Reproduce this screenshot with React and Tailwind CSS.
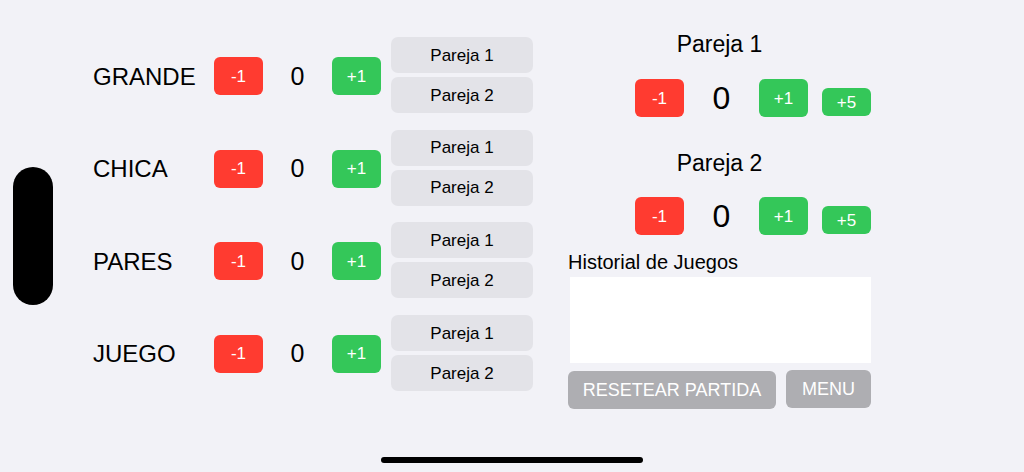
import React from 'react';

const rows = ['GRANDE', 'CHICA', 'PARES', 'JUEGO'];

const RedBtn = ({ className = '' }) => (
  <button className={`w-[49px] h-[38px] rounded-[6px] bg-[#ff3b30] text-white text-[17px] leading-none ${className}`}>-1</button>
);

const GreenBtn = ({ label = '+1', className = '' }) => (
  <button className={`w-[49px] h-[38px] rounded-[6px] bg-[#34c759] text-white text-[17px] leading-none ${className}`}>{label}</button>
);

const ScoreRow = ({ name }) => (
  <div className="flex items-center h-[76px]">
    <div className="w-[121px] text-[24px] text-black leading-none mt-[3px]">{name}</div>
    <RedBtn className="mt-[2px]" />
    <div className="w-[69px] text-center text-[25px] text-black leading-none mt-[2px]">0</div>
    <GreenBtn className="mt-[2px]" />
    <div className="ml-[10px] w-[142px] flex flex-col gap-[4px]">
      <button className="h-[36px] pt-[1px] rounded-[7px] bg-[#e3e3e8] text-[17px] text-black">Pareja 1</button>
      <button className="h-[36px] pt-[1px] rounded-[7px] bg-[#e3e3e8] text-[17px] text-black">Pareja 2</button>
    </div>
  </div>
);

const TeamScore = () => (
  <div className="flex items-end pl-[67px] h-[38px]">
    <RedBtn />
    <div className="w-[75px] h-[38px] flex items-center justify-center text-[32px] text-black leading-none">0</div>
    <GreenBtn />
    <GreenBtn label="+5" className="ml-[14px] !h-[28px] mb-[1px]" />
  </div>
);

export default function App() {
  return (
    <div
      className="relative w-[1024px] h-[472px] bg-[#f2f2f7] overflow-hidden"
      style={{ fontFamily: '"Liberation Sans", Arial, sans-serif' }}
    >
      {/* sensor housing */}
      <div className="absolute left-[13px] top-[167px] w-[40px] h-[138px] rounded-full bg-black" />

      <div className="flex pl-[93px] pt-[37px]">
        <div className="flex flex-col gap-[16.67px]">
          {rows.map((r) => (
            <ScoreRow key={r} name={r} />
          ))}
        </div>

        <div className="ml-[35px] w-[303px] flex flex-col -mt-[7px]">
          <div className="h-[28px] leading-[28px] text-[23px] text-black text-center">Pareja 1</div>
          <div className="mt-[21px]">
            <TeamScore />
          </div>
          <div className="mt-[32px] h-[28px] leading-[28px] text-[23px] text-black text-center">Pareja 2</div>
          <div className="mt-[20px]">
            <TeamScore />
          </div>
          <div className="mt-[15px] h-[24px] leading-[24px] text-[20px] text-black">Historial de Juegos</div>
          <div className="mt-[3px] ml-[2px] w-[301px] h-[86px] bg-white" />
          <div className="mt-[7px] flex items-start gap-[10px]">
            <button className="w-[208px] h-[38px] mt-[1px] rounded-[6px] bg-[#aeaeb2] text-white text-[18px]">RESETEAR PARTIDA</button>
            <button className="w-[85px] h-[38px] rounded-[6px] bg-[#aeaeb2] text-white text-[18px]">MENU</button>
          </div>
        </div>
      </div>

      {/* home indicator */}
      <div className="absolute left-[381px] top-[457px] w-[262px] h-[6px] rounded-full bg-black" />
    </div>
  );
}
